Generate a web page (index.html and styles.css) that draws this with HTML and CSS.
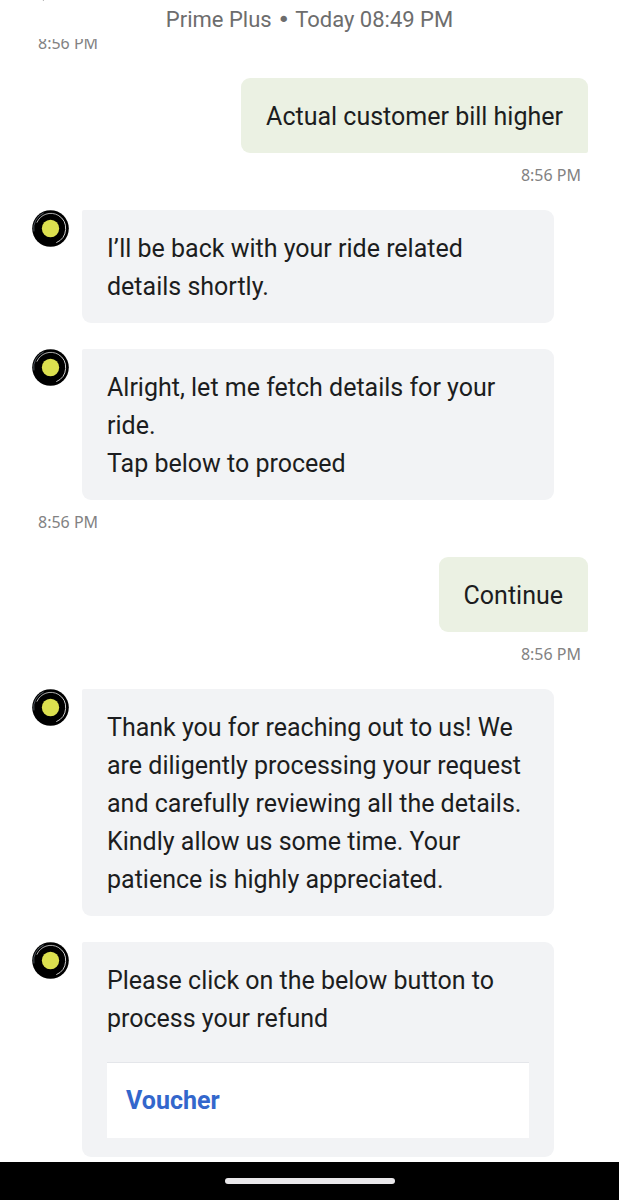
FILE: index.html
```html
<!DOCTYPE html>
<html lang="en">
<head>
<meta charset="utf-8">
<meta name="viewport" content="width=device-width, initial-scale=1">
<title>Support chat</title>
<link rel="stylesheet" href="styles.css">
</head>
<body>
<svg class="defs" aria-hidden="true">
  <symbol id="logo" viewBox="0 0 38 38">
    <circle cx="19" cy="19" r="18.800" fill="#000"/>
    <path d="M5 13A15.500 15.500 0 0 1 27 5.500" fill="none" stroke="#c4c4c4" stroke-width="0.900"/>
    <path d="M2 22A17.300 17.300 0 0 1 12 3" fill="none" stroke="#8592a0" stroke-width="0.600"/>
    <path d="M27 5.500A15.800 15.800 0 0 1 25 33.500" fill="none" stroke="#e8e8e8" stroke-width="0.900"/>
    <circle cx="19" cy="19" r="8.900" fill="#dce04f"/>
  </symbol>
</svg>
<div class="screen">
  <header class="header">
    <button class="back" type="button" aria-label="Back"><svg width="24" height="24" viewBox="0 0 24 24"><path d="M22 12H3M12 22L3 12L12 2" fill="none" stroke="#666" stroke-width="2"/></svg></button>
    <p class="subtitle">Prime Plus <span class="dot">•</span> Today 08:49 PM</p>
  </header>
  <main class="scroller">
    <div class="messages">
      <div class="group"><time class="time">8:56 PM</time></div>
      <div class="group sent">
        <p class="bubble">Actual customer bill higher</p>
        <time class="time">8:56 PM</time>
      </div>
      <div class="group">
        <div class="row"><svg class="avatar" role="img" aria-label="Agent"><use href="#logo"/></svg>
          <p class="bubble">I’ll be back with your ride related details shortly.</p></div>
      </div>
      <div class="group">
        <div class="row"><svg class="avatar" role="img" aria-label="Agent"><use href="#logo"/></svg>
          <p class="bubble">Alright, let me fetch details for your ride.<br>Tap below to proceed</p></div>
        <time class="time">8:56 PM</time>
      </div>
      <div class="group sent">
        <p class="bubble">Continue</p>
        <time class="time">8:56 PM</time>
      </div>
      <div class="group">
        <div class="row"><svg class="avatar" role="img" aria-label="Agent"><use href="#logo"/></svg>
          <p class="bubble">Thank you for reaching out to us! We are diligently processing your request and carefully reviewing all the details. Kindly allow us some time. Your patience is highly appreciated.</p></div>
      </div>
      <div class="group">
        <div class="row"><svg class="avatar" role="img" aria-label="Agent"><use href="#logo"/></svg>
          <div class="bubble">
            <p>Please click on the below button to process your refund</p>
            <button class="option" type="button">Voucher</button>
          </div></div>
      </div>
    </div>
  </main>
  <footer class="navbar"><span class="handle"></span></footer>
</div>
</body>
</html>
```

FILE: styles.css
```css
* { box-sizing: border-box; }
body { margin: 0; background: #fff; color: #1c1d20; font-family: Roboto, "Noto Sans", sans-serif; }
p { margin: 0; }
.defs { position: absolute; width: 0; height: 0; }
.screen { display: flex; flex-direction: column; height: 100vh; }
.header { position: relative; flex: none; padding: 5px 16px 4px; overflow: hidden; }
.subtitle { text-align: center; font-size: 22px; line-height: 30px; color: #6d6d6d; }
.dot { font-family: "DejaVu Sans", sans-serif; line-height: 1; }
.back { position: absolute; left: 32px; top: -22px; padding: 0; border: 0; background: none; line-height: 0; }
.scroller { display: flex; flex: 1; flex-direction: column-reverse; min-height: 0; overflow-y: auto; scrollbar-width: none; }
.messages { display: flex; flex: none; flex-direction: column; gap: 26px; padding: 0 31px 5px; }
.group { display: flex; flex-direction: column; align-items: flex-start; }
.sent { align-items: flex-end; }
.row { display: flex; align-items: flex-start; gap: 13px; width: 100%; padding: 0 34px 0 1px; }
.avatar { flex: none; width: 37px; height: 37px; }
.bubble { padding: 20px 25px 17px; border-radius: 9px; background: #f2f3f5; font-size: 25px; line-height: 38px; }
.row .bubble { flex: 1; border-top-left-radius: 2px; }
.sent .bubble { border-bottom-right-radius: 2px; background: #ebf1e3; }
.time { padding: 13px 7px 0; font-family: "Noto Sans", sans-serif; font-size: 16px; line-height: 18px; color: #828282; }
.option { display: block; width: 100%; margin: 24px 0 2px; padding: 18px 19px 17px; border: 0; border-top: 1px solid #e4e6ea; background: #fff; color: #3367cc; font: 700 25px/40px Roboto, sans-serif; text-align: left; }
.navbar { display: flex; flex: none; align-items: center; justify-content: center; height: 38px; background: #000; }
.handle { width: 170px; height: 6px; border-radius: 3px; background: #e9e7ea; }
```
